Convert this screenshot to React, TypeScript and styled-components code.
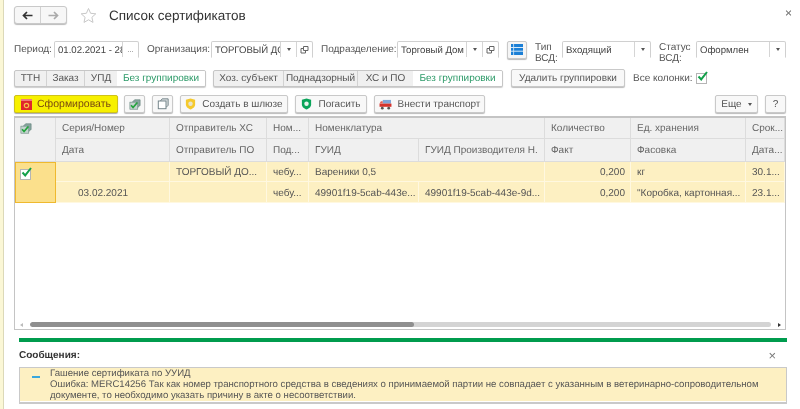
import React from "react";
import styled, { createGlobalStyle } from "styled-components";

const Global = createGlobalStyle`
  html, body { margin: 0; padding: 0; background: #fff; }
  body {
    font-family: "Liberation Sans", Arial, sans-serif; font-size: 10px; color: #4a4a4a;
    text-rendering: geometricPrecision;
  }
`;

const Page = styled.div`
  width: 800px; height: 409px; overflow: hidden; display: flex; background: #fff; filter: blur(0.3px);
`;
const Strip = styled.div`
  width: 3px; flex: none; background: #fbf7d6; border-right: 1px solid #dcd9b8;
`;
const Main = styled.div`
  flex: 1; min-width: 0; display: flex; flex-direction: column; padding: 6px 14px 0 10px;
`;
const TitleRow = styled.div`
  height: 18px; display: flex; align-items: center; position: relative;
`;
const NavGroup = styled.div`
  width: 53px; height: 18px; box-sizing: border-box; display: flex; border: 1px solid #c9c9c9; border-radius: 3px;
  box-shadow: 0 1px 1px #bbb; background: #f7f7f7;
`;
const NavButton = styled.div<{ $first?: boolean }>`
  flex: 1; display: flex; align-items: center; justify-content: center;
  border-right: ${p => (p.$first ? "1px solid #d2d2d2" : "none")};
`;
const Title = styled.div`
  font-size: 13.5px; color: #333; margin-left: 12px; line-height: 18px; padding-top: 2px;
`;
const Star = styled.svg`
  width: 17px; height: 17px; margin-left: 13px;
`;
const Close = styled.div`
  position: absolute; right: -6px; top: 0; font-size: 12px; color: #666;
`;
const FilterRow = styled.div`
  height: 19px; margin-top: 16px; display: flex; align-items: center;
`;
const Label = styled.div<{ $ml?: number; $w?: number }>`
  margin-left: ${p => p.$ml ?? 0}px; width: ${p => (p.$w ? `${p.$w}px` : "auto")}; flex: none;
  line-height: 11px; color: #555;
`;
const TwoLineLabel = styled(Label)`
  padding-top: 6px;
`;
const Field = styled.div<{ $w: number; $ml: number }>`
  width: ${p => p.$w}px; margin-left: ${p => p.$ml}px; height: 17px; box-sizing: border-box; flex: none;
  display: flex; align-items: center;
  border: 1px solid #d0d0d0; border-bottom-color: transparent; border-radius: 2px 2px 0 0; background: #fff;
  overflow: hidden;
`;
const FieldText = styled.div`
  flex: 1; min-width: 0; white-space: nowrap; overflow: hidden; padding: 2px 1px 0 3px; font-size: 9.6px; color: #444;
`;
const FieldButton = styled.div`
  width: 15px; height: 100%; flex: none; display: flex; align-items: center; justify-content: center;
  border-left: 1px solid #d5d5d5; font-size: 8px; color: #777;
`;
const Caret = styled.span`
  display: inline-block; width: 0; height: 0; border-left: 2.5px solid transparent; border-right: 2.5px solid transparent;
  border-top: 3px solid #555;
`;
const SquareButton = styled.div`
  width: 20px; height: 18px; box-sizing: border-box; flex: none; margin-left: 8px; display: flex; align-items: center; justify-content: center;
  border: 1px solid #c9c9c9; box-shadow: 0 1px 1px #bbb; background: #f5f5f5; border-radius: 2px;
`;
const TabsRow = styled.div`
  height: 18px; margin-top: 10px; display: flex; align-items: center;
`;
const TabGroup = styled.div<{ $ml?: number }>`
  height: 17px; box-sizing: border-box; margin-left: ${p => p.$ml ?? 0}px; display: flex; flex: none; border: 1px solid #c6c6c6;
  border-radius: 2px; box-shadow: 0 1px 1px #ccc; background: #f0f0f0; overflow: hidden;
`;
const Tab = styled.div<{ $w: number; $active?: boolean }>`
  width: ${p => p.$w}px; box-sizing: border-box; display: flex; align-items: center; justify-content: center; white-space: nowrap;
  border-left: ${p => (p.$active ? "none" : "1px solid #d2d2d2")};
  background: ${p => (p.$active ? "#fff" : "transparent")};
  color: ${p => (p.$active ? "#2c9a68" : "#555")};
  &:first-child { border-left: none; }
`;
const Button = styled.div<{ $w: number; $ml?: number }>`
  width: ${p => p.$w}px; margin-left: ${p => p.$ml ?? 0}px; height: 18px; flex: none; display: flex;
  align-items: center; justify-content: center; gap: 6px; border: 1px solid #c9c9c9; border-radius: 2px;
  box-shadow: 0 1px 1px #bbb; background: #f8f8f8; color: #555; box-sizing: border-box; white-space: nowrap;
`;
const PrimaryButton = styled(Button)`
  background: #f7f000; border-color: #cfc21a; color: #7a4a10; font-size: 10.5px; gap: 5px; box-shadow: 0 1px 1px #aaa;
`;
const CheckLabel = styled.div`
  margin-left: 8px; color: #555; width: 57px; flex: none; white-space: nowrap;
`;
const CheckBox = styled.div<{ $ml?: number }>`
  width: 11px; height: 11px; margin-left: ${p => p.$ml ?? 6}px; flex: none; position: relative;
  border: 1px solid #b5b5b5; background: #fff; box-sizing: border-box;
`;
const CheckMark = styled.svg`
  position: absolute; left: -1px; top: -4px; width: 13px; height: 13px;
`;
const ActionRow = styled.div`
  height: 18px; margin-top: 8px; display: flex; align-items: center;
`;
const Spacer = styled.div`
  flex: 1;
`;
const Table = styled.div`
  margin-top: 3px; height: 214px; flex: none; box-sizing: border-box; border: 1px solid #c4c4c4; border-top-width: 2px;
  position: relative; display: grid;
  grid-template-columns: 41px 114px 97px 42px 110px 126px 86px 115px 39px;
  grid-template-rows: 21px 23px 20px 21px 1fr;
  overflow: hidden;
`;
const HeaderCell = styled.div<{ $span?: number; $rows?: number }>`
  grid-column: span ${p => p.$span ?? 1}; grid-row: span ${p => p.$rows ?? 1};
  background: #f0f0f0; border-right: 1px solid #dcdcdc; border-bottom: 1px solid #dcdcdc;
  display: flex; align-items: center; padding: 1px 0 0 6px; white-space: nowrap; overflow: hidden; color: #666;
  &:last-child { border-right: none; }
`;
const IconHeaderCell = styled(HeaderCell)`
  align-items: flex-start; padding: 5px 0 0 5px;
`;
const Cell = styled.div<{ $span?: number; $right?: boolean; $indent?: number }>`
  grid-column: span ${p => p.$span ?? 1};
  background: #fdf0c2; border-right: 1px solid #fff8e0; border-bottom: 1px solid #fff8e0;
  display: flex; align-items: center; justify-content: ${p => (p.$right ? "flex-end" : "flex-start")};
  padding: 2px ${p => (p.$right ? "5px" : "0")} 0 ${p => p.$indent ?? 6}px; white-space: nowrap; overflow: hidden; color: #555;
`;
const SelectCell = styled.div`
  grid-row: span 2; background: #fbe08c; border: 1px solid #efb92e; padding: 6px 0 0 4px; position: relative;
`;
const Filler = styled.div`
  grid-column: 1 / -1;
`;
const ScrollBar = styled.div`
  position: absolute; left: 0; right: 0; bottom: 0; height: 9px; display: flex; align-items: center; gap: 7px;
  padding: 0 4px 0 5px; background: #fff;
`;
const Track = styled.div`
  flex: 1; height: 5px; border-radius: 3px; background: #d4d4d4; overflow: hidden;
`;
const Thumb = styled.div`
  width: 384px; height: 100%; border-radius: 3px; background: #8f8f8f;
`;
const Arrow = styled.div<{ $dir: "l" | "r" }>`
  width: 0; height: 0; border-top: 2px solid transparent; border-bottom: 2px solid transparent;
  ${p => (p.$dir === "l" ? "border-right: 3px solid #bbb;" : "border-left: 3px solid #333;")}
`;
const GreenBar = styled.div`
  height: 4px; margin: 8px 0 0 5px; background: #009c4e; width: 768px;
`;
const MessagesHead = styled.div`
  margin-top: 7px; height: 12px; display: flex; align-items: center; justify-content: space-between;
  font-weight: bold; color: #333; padding: 0 0 0 5px; width: 757px; font-size: 10px;
`;
const MessagesClose = styled.span`
  font-weight: normal; color: #777; font-size: 13px;
`;
const Message = styled.div`
  margin: 6px 0 0 5px; width: 768px; height: 37px; box-sizing: border-box; display: flex;
  border: 1px solid #c9c9c9; border-bottom-width: 2px; background: #fff; padding-bottom: 1px;
`;
const MessageBody = styled.div`
  flex: 1; display: flex; background: #fdf0c2;
`;
const Dash = styled.div`
  width: 8px; height: 2px; background: #3aa7dd; margin: 8px 0 0 12px; flex: none;
`;
const MessageText = styled.div`
  margin-left: 10px; line-height: 11px; color: #555; white-space: nowrap; font-size: 9.6px;
`;

const Tick = () => (
  <CheckMark viewBox="0 0 13 13">
    <path d="M2.5 6.5 L5.2 9.4 L11 2" fill="none" stroke="#12a04a" strokeWidth="2" />
  </CheckMark>
);

const LeftArrow = () => (
  <svg width="11" height="9" viewBox="0 0 11 9"><path d="M5 1 L1.5 4.5 L5 8 M2 4.5 H10.5" fill="none" stroke="#333" strokeWidth="1.7" /></svg>
);
const RightArrow = () => (
  <svg width="11" height="9" viewBox="0 0 11 9"><path d="M6 1 L9.5 4.5 L6 8 M9 4.5 H0.5" fill="none" stroke="#aaa" strokeWidth="1.7" /></svg>
);
const Copy = () => (
  <svg width="9" height="9" viewBox="0 0 9 9"><path d="M3.5 1.5 H8 V5.5 H3.5 Z M1 3.5 H3.5 M1 3.5 V8 H5.5 V5.5" fill="none" stroke="#666" strokeWidth="1" /></svg>
);
const Stacked = () => (
  <svg width="12" height="11" viewBox="0 0 15 14">
    <path d="M4 4 L7 1 H14 V8 L11 11 Z" fill="#8aa7a0" stroke="#5f7d76" strokeWidth=".8" />
    <rect x="1" y="4" width="10" height="9" fill="#c5d3cf" stroke="#6c8a83" strokeWidth=".8" />
    <path d="M2.5 8 L5 10.8 L10.5 4.5" fill="none" stroke="#22a33c" strokeWidth="2.2" />
  </svg>
);
const Pages = () => (
  <svg width="12" height="12" viewBox="0 0 14 14">
    <path d="M4 3.5 L6 1 H13 V8.5 L10.5 11" fill="#dfe3e4" stroke="#6e7f85" strokeWidth="1.1" />
    <rect x="1.5" y="3.5" width="9" height="9" fill="#fff" stroke="#6e7f85" strokeWidth="1.1" />
  </svg>
);
const Shield = ({ color, inner }: { color: string; inner: string }) => (
  <svg width="11" height="12" viewBox="0 0 11 13">
    <path d="M5.5 .5 L10.5 2 V7 C10.5 10 7.5 11.7 5.5 12.5 C3.5 11.7 .5 10 .5 7 V2 Z" fill={color} />
    <circle cx="5.5" cy="6.3" r="2.4" fill={inner} />
  </svg>
);
const Truck = () => (
  <svg width="13" height="11" viewBox="0 0 14 12">
    <rect x="4" y="1" width="9" height="4" fill="#7fa6d8" />
    <rect x=".5" y="5" width="13" height="3.5" fill="#d5332c" />
    <path d="M.5 5 L2 2.5 H4 V5 Z" fill="#e2605a" />
    <circle cx="3.5" cy="10" r="1.5" fill="#555" />
    <circle cx="10.5" cy="10" r="1.5" fill="#555" />
  </svg>
);
const Report = () => (
  <svg width="11" height="11" viewBox="0 0 11 11">
    <rect width="11" height="11" fill="#e0262c" />
    <rect x="0" y="0" width="11" height="2" fill="#f0787c" />
    <circle cx="5.5" cy="6.5" r="2.2" fill="none" stroke="#f7c04a" strokeWidth="1.2" />
  </svg>
);
const ListIcon = () => (
  <svg width="12" height="11" viewBox="0 0 12 11">
    <rect width="12" height="11" fill="#1b7fd6" />
    <path d="M0 3.5 H12 M0 7.2 H12" stroke="#d6e9f8" strokeWidth="1" />
    <path d="M2.6 0 V11" stroke="#d6e9f8" strokeWidth=".8" />
  </svg>
);

export default function App() {
  return (
    <Page>
      <Global />
      <Strip />
      <Main>
        <TitleRow>
          <NavGroup>
            <NavButton $first><LeftArrow /></NavButton>
            <NavButton><RightArrow /></NavButton>
          </NavGroup>
          <Star viewBox="0 0 17 17">
            <path d="M8.5 1.5 L10.6 6.3 L15.8 6.8 L11.9 10.3 L13 15.4 L8.5 12.8 L4 15.4 L5.1 10.3 L1.2 6.8 L6.4 6.3 Z" fill="#fff" stroke="#c8c8c8" strokeWidth="1" />
          </Star>
          <Title>Список сертификатов</Title>
          <Close>×</Close>
        </TitleRow>

        <FilterRow>
          <Label $w={36}>Период:</Label>
          <Field $w={85} $ml={4}>
            <FieldText>01.02.2021 - 28.02.2021</FieldText>
            <FieldButton>...</FieldButton>
          </Field>
          <Label $ml={8} $w={60}>Организация:</Label>
          <Field $w={102} $ml={4}>
            <FieldText>ТОРГОВЫЙ ДОМ</FieldText>
            <FieldButton><Caret /></FieldButton>
            <FieldButton><Copy /></FieldButton>
          </Field>
          <Label $ml={8} $w={71}>Подразделение:</Label>
          <Field $w={102} $ml={5}>
            <FieldText>Торговый Дом</FieldText>
            <FieldButton><Caret /></FieldButton>
            <FieldButton><Copy /></FieldButton>
          </Field>
          <SquareButton><ListIcon /></SquareButton>
          <TwoLineLabel $ml={8} $w={23}>Тип ВСД:</TwoLineLabel>
          <Field $w={89} $ml={4}>
            <FieldText>Входящий</FieldText>
            <FieldButton><Caret /></FieldButton>
          </Field>
          <TwoLineLabel $ml={8} $w={32}>Статус ВСД:</TwoLineLabel>
          <Field $w={90} $ml={5}>
            <FieldText>Оформлен</FieldText>
            <FieldButton><Caret /></FieldButton>
          </Field>
        </FilterRow>

        <TabsRow>
          <TabGroup>
            <Tab $w={31}>ТТН</Tab>
            <Tab $w={38}>Заказ</Tab>
            <Tab $w={33}>УПД</Tab>
            <Tab $w={88} $active>Без группировки</Tab>
          </TabGroup>
          <TabGroup $ml={7}>
            <Tab $w={69}>Хоз. субъект</Tab>
            <Tab $w={74}>Поднадзорный</Tab>
            <Tab $w={56}>ХС и ПО</Tab>
            <Tab $w={89} $active>Без группировки</Tab>
          </TabGroup>
          <Button $w={114} $ml={8}>Удалить группировки</Button>
          <CheckLabel>Все колонки:</CheckLabel>
          <CheckBox><Tick /></CheckBox>
        </TabsRow>

        <ActionRow>
          <PrimaryButton $w={104}><Report />Сформировать</PrimaryButton>
          <Button $w={21} $ml={6}><Stacked /></Button>
          <Button $w={21} $ml={7}><Pages /></Button>
          <Button $w={108} $ml={7}><Shield color="#f5c92c" inner="#e8e4cc" />Создать в шлюзе</Button>
          <Button $w={72} $ml={7}><Shield color="#0aa45a" inner="#e8f4ec" />Погасить</Button>
          <Button $w={111} $ml={7}><Truck />Внести транспорт</Button>
          <Spacer />
          <Button $w={43}>Еще<Caret /></Button>
          <Button $w={21} $ml={7}>?</Button>
        </ActionRow>

        <Table>
          <IconHeaderCell $rows={2}><Stacked /></IconHeaderCell>
          <HeaderCell>Серия/Номер</HeaderCell>
          <HeaderCell>Отправитель ХС</HeaderCell>
          <HeaderCell>Ном...</HeaderCell>
          <HeaderCell $span={2}>Номенклатура</HeaderCell>
          <HeaderCell>Количество</HeaderCell>
          <HeaderCell>Ед. хранения</HeaderCell>
          <HeaderCell>Срок...</HeaderCell>

          <HeaderCell>Дата</HeaderCell>
          <HeaderCell>Отправитель ПО</HeaderCell>
          <HeaderCell>Под...</HeaderCell>
          <HeaderCell>ГУИД</HeaderCell>
          <HeaderCell>ГУИД Производителя Н.</HeaderCell>
          <HeaderCell>Факт</HeaderCell>
          <HeaderCell>Фасовка</HeaderCell>
          <HeaderCell>Дата...</HeaderCell>

          <SelectCell><CheckBox $ml={0}><Tick /></CheckBox></SelectCell>
          <Cell />
          <Cell>ТОРГОВЫЙ ДО...</Cell>
          <Cell>чебу...</Cell>
          <Cell $span={2}>Вареники 0,5</Cell>
          <Cell $right>0,200</Cell>
          <Cell>кг</Cell>
          <Cell>30.1...</Cell>

          <Cell $indent={22}>03.02.2021</Cell>
          <Cell />
          <Cell>чебу...</Cell>
          <Cell>49901f19-5cab-443e...</Cell>
          <Cell>49901f19-5cab-443e-9d...</Cell>
          <Cell $right>0,200</Cell>
          <Cell>"Коробка, картонная...</Cell>
          <Cell>23.1...</Cell>

          <Filler />
          <ScrollBar>
            <Arrow $dir="l" />
            <Track><Thumb /></Track>
            <Arrow $dir="r" />
          </ScrollBar>
        </Table>

        <GreenBar />
        <MessagesHead>Сообщения:<MessagesClose>×</MessagesClose></MessagesHead>
        <Message>
          <MessageBody>
            <Dash />
            <MessageText>
              Гашение сертификата по УУИД<br />
              Ошибка: MERC14256 Так как номер транспортного средства в сведениях о принимаемой партии не совпадает с указанным в ветеринарно-сопроводительном<br />
              документе, то необходимо указать причину в акте о несоответствии.
            </MessageText>
          </MessageBody>
        </Message>
      </Main>
    </Page>
  );
}
